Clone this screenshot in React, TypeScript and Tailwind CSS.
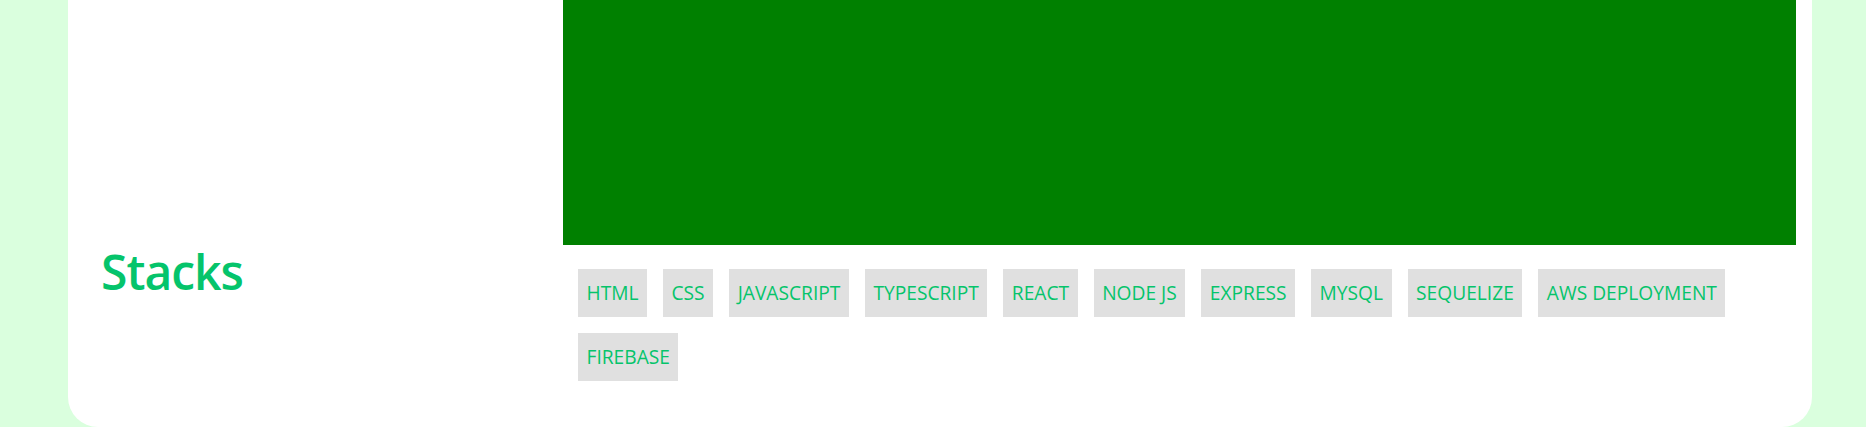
const stacks = [
  "HTML",
  "CSS",
  "JAVASCRIPT",
  "TYPESCRIPT",
  "REACT",
  "NODE JS",
  "EXPRESS",
  "MYSQL",
  "SEQUELIZE",
  "AWS DEPLOYMENT",
  "FIREBASE",
];

const App = () => {
  return (
    <div className="h-[427px] overflow-hidden bg-[#daffde] font-['Open_Sans',sans-serif]">
      <section className="ml-[68px] mr-[54px] bg-white rounded-b-[30px]">
        {/* Preview */}
        <div className="flex">
          <div className="w-[495px] shrink-0" />
          <div className="flex-1 pr-4">
            <div className="h-[245px] bg-[#008000]" />
          </div>
        </div>

        {/* Stacks */}
        <div className="flex">
          <h2 className="w-[495px] shrink-0 pl-[33px] pt-[3px] text-5xl leading-none font-semibold tracking-[-1px] text-[#05c46b]">
            Stacks
          </h2>
          <div className="flex-1 pr-4 pt-6 pb-[46px] pl-[15px]">
            <ul className="flex flex-wrap gap-4">
              {stacks.map((item) => (
                <li
                  key={item}
                  className="h-12 px-[8.5px] flex items-center bg-[#e0e0e0] text-[#05c46b] text-[19.2px] whitespace-nowrap"
                >
                  {item}
                </li>
              ))}
            </ul>
          </div>
        </div>
      </section>
    </div>
  );
};

export default App;
